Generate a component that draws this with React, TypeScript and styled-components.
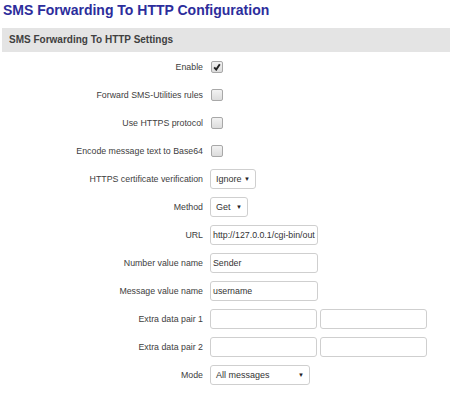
import styled, { createGlobalStyle } from 'styled-components';

const Global = createGlobalStyle`
  body {
    margin: 0;
    background: #fff;
    font-family: 'Liberation Sans', Arial, sans-serif;
  }
`;

const Page = styled.div`
  width: 450px;
  padding-left: 2px;
  box-sizing: border-box;
`;

const Title = styled.h2`
  margin: 0;
  padding: 1px 0 0 1px;
  height: 27px;
  font-size: 14px;
  line-height: 18px;
  font-weight: bold;
  color: #2c2d9c;
`;

const SectionHead = styled.div`
  height: 24px;
  line-height: 24px;
  background: #e4e4e4;
  padding-left: 7px;
  font-size: 10px;
  font-weight: bold;
  color: #404040;
`;

const Form = styled.div`
  padding-top: 1px;
`;

const Row = styled.div`
  display: flex;
  align-items: center;
  height: 28px;
`;

const Label = styled.label`
  width: 201px;
  text-align: right;
  font-size: 8.8px;
  color: #404040;
  padding-right: 7px;
`;

const Controls = styled.div`
  display: flex;
  align-items: center;
  gap: 3px;
`;

const Box = styled.span`
  display: inline-flex;
  align-items: center;
  justify-content: center;
  width: 10px;
  height: 10px;
  margin-left: 1px;
  border: 1px solid #a8a8a8;
  border-radius: 2px;
  background: linear-gradient(#f2f2f2, #dcdcdc);
`;

const Input = styled.div<{ $w: number }>`
  box-sizing: border-box;
  width: ${(p) => p.$w}px;
  height: 20px;
  border: 1px solid #cfcfcf;
  border-radius: 3px;
  padding: 0 2px;
  font-size: 8.8px;
  line-height: 18px;
  color: #333;
  white-space: nowrap;
  overflow: hidden;
  background: #fff;
`;

const Select = styled.div<{ $w: number }>`
  box-sizing: border-box;
  width: ${(p) => p.$w}px;
  height: 20px;
  border: 1px solid #cfcfcf;
  border-radius: 3px;
  padding: 0 5px;
  display: flex;
  align-items: center;
  justify-content: space-between;
  font-size: 9px;
  color: #333;
  background: #fff;
`;

const Arrow = styled.span`
  font-size: 6px;
  color: #222;
`;

const Check = ({ on }: { on?: boolean }) => (
  <Box>
    {on && (
      <svg width="8" height="8" viewBox="0 0 8 8">
        <path d="M1.2 4.4 L3.2 6.6 L6.8 1.2" fill="none" stroke="#222" strokeWidth="1.9" />
      </svg>
    )}
  </Box>
);

const Drop = ({ w, text }: { w: number; text: string }) => (
  <Select $w={w}>
    <span>{text}</span>
    <Arrow>▼</Arrow>
  </Select>
);

const App = () => (
  <Page>
    <Global />
    <Title>SMS Forwarding To HTTP Configuration</Title>
    <SectionHead>SMS Forwarding To HTTP Settings</SectionHead>
    <Form>
      <Row>
        <Label>Enable</Label>
        <Check on />
      </Row>
      <Row>
        <Label>Forward SMS-Utilities rules</Label>
        <Check />
      </Row>
      <Row>
        <Label>Use HTTPS protocol</Label>
        <Check />
      </Row>
      <Row>
        <Label>Encode message text to Base64</Label>
        <Check />
      </Row>
      <Row>
        <Label>HTTPS certificate verification</Label>
        <Drop w={46} text="Ignore" />
      </Row>
      <Row>
        <Label>Method</Label>
        <Drop w={38} text="Get" />
      </Row>
      <Row>
        <Label>URL</Label>
        <Input $w={108}>http://127.0.0.1/cgi-bin/out</Input>
      </Row>
      <Row>
        <Label>Number value name</Label>
        <Input $w={108}>Sender</Input>
      </Row>
      <Row>
        <Label>Message value name</Label>
        <Input $w={108}>username</Input>
      </Row>
      <Row>
        <Label>Extra data pair 1</Label>
        <Controls>
          <Input $w={107} />
          <Input $w={107} />
        </Controls>
      </Row>
      <Row>
        <Label>Extra data pair 2</Label>
        <Controls>
          <Input $w={107} />
          <Input $w={107} />
        </Controls>
      </Row>
      <Row>
        <Label>Mode</Label>
        <Drop w={100} text="All messages" />
      </Row>
    </Form>
  </Page>
);

export default App;
